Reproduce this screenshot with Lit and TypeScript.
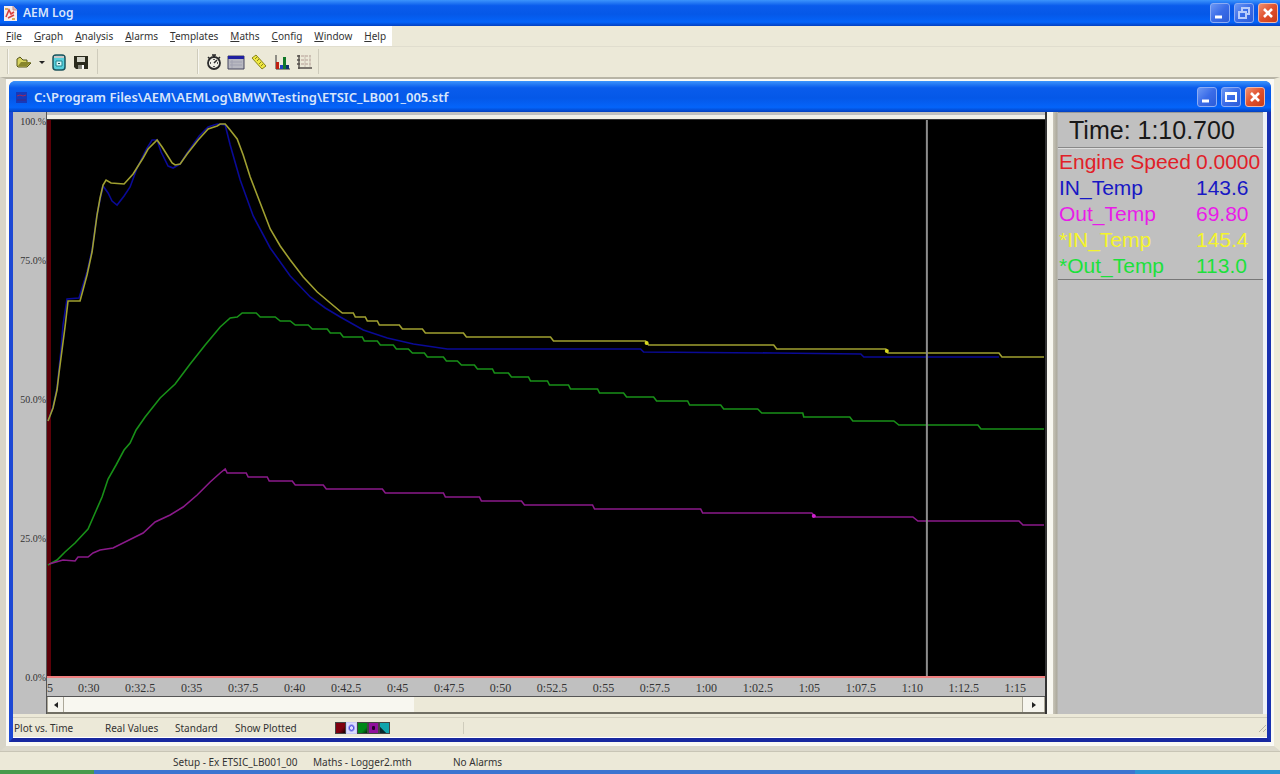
import { LitElement, html, css, svg, nothing } from "lit";
import { customElement, property, state } from "lit/decorators.js";

type Trace = { color: string; points: string };

// Traces are plotted in the coordinate space of the chart's viewBox.
const TRACES: Trace[] = [
  {
    color: "#0a0a96",
    points:
      "48,421 53,407 57,388 61,350 63,325 67,299 79,298 87,272 92,250 97,214 103,186 108,193 112,201 117,205 124,196 130,187 137,168 147,148 152,140 157,140 161,152 168,166 173,168 180,164 187,153 199,136 208,127 217,124 225,125 230,145 240,180 253,216 270,248 290,276 310,297 325,308 340,317 363,330 387,338 413,344 447,349 640,349 643,352 773,353 860,354 863,357 998,357",
  },
  {
    color: "#a0a030",
    points:
      "48,421 53,408 57,390 59,373 62,350 65,327 68,301 80,301 87,275 92,252 97,215 100,198 103,185 106,180 111,183 124,184 133,174 143,158 148,149 157,140 162,147 172,163 175,165 180,164 187,154 198,140 208,129 217,126 220,124 225,124 230,130 237,139 243,155 250,177 260,203 270,229 280,246 290,260 303,277 317,292 330,303 342,313 353,313 355,317 365,317 367,321 377,321 379,325 399,325 402,329 422,329 425,333 463,333 466,337 550,337 553,341 645,341 648,345 773,345 776,349 885,349 887,353 998,353 1001,357 1043,357",
  },
  {
    color: "#189018",
    points:
      "48,565 57,560 65,552 75,543 88,529 95,513 102,497 108,479 116,465 124,450 130,443 136,430 145,417 160,398 175,384 190,364 205,345 220,327 230,318 237,317 242,313 256,313 260,317 275,317 280,321 290,321 295,325 308,325 312,329 327,329 330,333 340,333 343,337 362,337 364,341 377,341 380,345 393,345 396,349 408,349 412,353 424,353 427,357 443,357 446,361 457,361 461,365 474,365 477,369 492,369 494,373 508,373 511,377 528,377 530,381 547,381 549,385 568,385 570,389 597,389 599,393 623,393 626,397 653,397 656,401 687,401 689,405 720,405 723,409 757,409 761,413 802,413 803,417 849,417 852,421 893,421 898,425 977,425 980,429 1043,429",
  },
  {
    color: "#8a1a8a",
    points:
      "49,564 63,560 75,561 78,557 88,557 93,553 100,550 113,548 133,538 143,533 155,522 170,515 183,507 197,495 210,482 220,473 225,469 227,473 246,473 248,477 267,477 269,481 292,481 295,485 323,485 326,489 382,489 385,493 443,493 445,497 479,497 481,501 521,501 524,505 592,505 594,509 700,509 702,513 811,513 815,517 912,517 917,521 1018,521 1022,525 1043,525",
  },
];

const MARKERS = [
  { x: 646, y: 343, color: "#d8d820" },
  { x: 886, y: 351, color: "#d8d820" },
  { x: 813, y: 516, color: "#d020d0" },
];

const CHANNELS = [
  { name: "Engine Speed", value: "0.0000", tone: "red" },
  { name: "IN_Temp", value: "143.6", tone: "blue" },
  { name: "Out_Temp", value: "69.80", tone: "magenta" },
  { name: "*IN_Temp", value: "145.4", tone: "yellow" },
  { name: "*Out_Temp", value: "113.0", tone: "green" },
];

const TIME_TICKS = [
  "0:30", "0:32.5", "0:35", "0:37.5", "0:40", "0:42.5", "0:45", "0:47.5", "0:50", "0:52.5",
  "0:55", "0:57.5", "1:00", "1:02.5", "1:05", "1:07.5", "1:10", "1:12.5", "1:15",
];

const MENUS = ["File", "Graph", "Analysis", "Alarms", "Templates", "Maths", "Config", "Window", "Help"];

@customElement("window-buttons")
class WindowButtons extends LitElement {
  @property({ type: Boolean }) maximized = false;

  static styles = css`
    :host { display: flex; gap: 4px; }
    button {
      width: 20px; height: 20px; padding: 0; border: 1px solid #8cacf4; border-radius: 3px;
      background: linear-gradient(135deg, #6c98f4, #3a6ce8 50%, #2c5cd8);
    }
    .close { background: linear-gradient(135deg, #f09070, #e0502c 50%, #c83c18); border-color: #f0b8a8; }
    svg { display: block; width: 18px; height: 18px; fill: none; stroke: #fff; stroke-width: 2; }
  `;

  render() {
    return html`
      <button aria-label="Minimize"><svg viewBox="0 0 18 18"><path stroke-width="3" d="M4 13h7" /></svg></button>
      ${this.maximized
        ? html`<button aria-label="Restore"><svg viewBox="0 0 18 18"><path stroke="#b8ccfa" d="M7 7V4h7v6h-3M4 8h7v6H4z" /></svg></button>`
        : html`<button aria-label="Maximize"><svg viewBox="0 0 18 18"><path d="M4 5h10v8H4zM4 6h10" /></svg></button>`}
      <button class="close" aria-label="Close"><svg viewBox="0 0 18 18"><path stroke-width="2.6" d="M5 5l8 8M13 5l-8 8" /></svg></button>
    `;
  }
}

@customElement("tool-bar")
class ToolBar extends LitElement {
  static styles = css`
    :host { display: flex; height: 31px; box-sizing: border-box; padding: 2px 0 3px 7px; border-top: 1px solid #e0ddce; }
    .group { display: flex; align-items: center; border-left: 1px solid #cfccbc; border-right: 1px solid #cfccbc; padding: 0 4px 0 6px; box-shadow: inset 1px 0 #f8f7f0; }
    .files { width: 79px; }
    .views { margin-left: 99px; width: 110px; gap: 3px; }
    button { border: 0; padding: 0; background: none; width: 20px; height: 20px; }
    .drop { width: 16px; }
    .wide { width: 24px; }
    svg { display: block; width: 18px; height: 18px; margin: auto; }
    .drop svg { width: 8px; }
  `;

  render() {
    return html`
      <div class="group files">
        <button aria-label="Open"><svg viewBox="0 0 18 18"><path fill="#d8d460" stroke="#55551a" d="M2 13V6l3-2 3 3h4v3h4l-4 4H3z" /><path fill="#88862c" d="M3 13l3-4h10l-4 4z" /></svg></button>
        <button class="drop" aria-label="Open recent"><svg viewBox="0 0 8 18"><path d="M1 8h6l-3 3z" fill="#222" /></svg></button>
        <button aria-label="Download log"><svg viewBox="0 0 18 18"><rect x="3" y="2" width="12" height="15" rx="3" fill="#58d0dc" stroke="#1c545c" stroke-width="1.5" /><path d="M4 4h10" stroke="#c8c8c8" stroke-width="2" /><path d="M6 8h6v5H6z" fill="#d8f8f8" stroke="#208490" /><path d="M8 10h2v1H8z" fill="#105058" /></svg></button>
        <button class="wide" aria-label="Save"><svg viewBox="0 0 18 18"><path d="M2 3h14v13H4l-2-2z" fill="#2a2a1c" /><path d="M5 4h8v5H5z" fill="#d4d4c8" /><path d="M6 12h6v4H6z" fill="#86867a" /><path d="M10 12h2v4h-2z" fill="#fff" /></svg></button>
      </div>
      <div class="group views">
        <button aria-label="Timer"><svg viewBox="0 0 18 18"><circle cx="9" cy="10" r="6" fill="#f0efe6" stroke="#2a2a2a" stroke-width="1.8" /><path d="M7 2h4M9 2v2M3 4l2 2M15 4l-2 2M9 10l3-3M9 6v1M9 13v1M5 10h1M12 10h1" stroke="#2a2a2a" stroke-width="1.5" /></svg></button>
        <button aria-label="Table view"><svg viewBox="0 0 18 18"><path d="M1 3h16v13H1z" fill="#b8b8c0" stroke="#44445c" /><path d="M1 3h16v3H1z" fill="#2020a0" /><path d="M3 9h12M3 12h12M5 7v8" stroke="#a0a0b0" /></svg></button>
        <button aria-label="Measure"><svg viewBox="0 0 18 18"><path d="M2 5l4-3 10 11-4 3z" fill="#f0e840" stroke="#88841c" /><path d="M7 4L5 6M9 6L7 8M11 9l-2 2M13 11l-2 2" stroke="#88841c" /></svg></button>
        <button aria-label="Histogram"><svg viewBox="0 0 18 18"><path d="M3 2v14h14" fill="none" stroke="#333" /><path d="M3 9h3v7H3z" fill="#c02010" /><path d="M7 12h3v4H7z" fill="#2040c0" /><path d="M10 4h3v12h-3z" fill="#107828" /><path d="M13 12h3v4h-3z" fill="#103070" /></svg></button>
        <button aria-label="Grid"><svg viewBox="0 0 18 18"><path d="M4 2v14M2 3h3M2 7h3M2 11h3M3 15h14" fill="none" stroke="#55504c" stroke-width="1.4" /><path d="M6 3h10M6 7h10M6 11h10" stroke="#b49c94" stroke-dasharray="3 1" /><path d="M10 2v12M15 2v12" stroke="#c8bcb0" /></svg></button>
      </div>
    `;
  }
}

@customElement("log-plot")
class LogPlot extends LitElement {
  static styles = css`
    :host { display: grid; grid-template-columns: 33px minmax(0, 1fr); background: #c0c0c0; min-width: 0; min-height: 0; }
    .scale {
      display: flex; flex-direction: column; justify-content: space-between; align-items: flex-end;
      margin-bottom: 30px; padding-top: 4px;
      font: 10px/12px "Liberation Serif", serif; color: #333;
    }
    .body { display: flex; flex-direction: column; min-width: 0; min-height: 0; border-left: 1px solid #555; border-right: 2px solid #333; }
    .rim { height: 8px; background: linear-gradient(#c0c0c0 3px, #f0efe8 3px, #f0efe8 7px, #333 7px); }
    .canvas { flex: 1; min-height: 0; background: #000; border-bottom: 2px solid #f08080; }
    .canvas svg { display: block; width: 100%; height: 100%; }
    .trace { fill: none; stroke-width: 1.6; }
    .times {
      display: grid; grid-template-columns: 16px repeat(19, minmax(0, 1fr)); padding-right: 4px; height: 19px; box-sizing: border-box;
      border-bottom: 1px solid #555; font: 12px/20px "Liberation Serif", serif; color: #333; text-align: center;
    }
    .first { text-align: left; }
    .scroll { display: flex; height: 17px; box-sizing: border-box; border-bottom: 2px solid #716f64; background: #ece9d8; }
    .scroll button { width: 17px; padding: 0; border: 1px solid #aca899; border-width: 0 1px; background: #f6f5ee; }
    .scroll .next { width: 23px; }
    .scroll svg { display: block; width: 8px; height: 8px; margin: auto; }
    .scroll input { appearance: none; flex: 1; min-width: 0; margin: 0; height: 15px; background: #ece9d8; }
    .scroll input::-webkit-slider-thumb { appearance: none; width: 350px; height: 15px; background: #f8f7f0; }
  `;

  render() {
    return html`
      <div class="scale">
        ${["100.%", "75.0%", "50.0%", "25.0%", "0.0%"].map((t) => html`<span>${t}</span>`)}
      </div>
      <div class="body">
        <div class="rim"></div>
        <div class="canvas">
          <svg viewBox="47 120 997 556" preserveAspectRatio="none" role="img" aria-label="Channel traces against time">
            <rect x="47" y="120" width="4" height="556" fill="#5c0008" />
            ${TRACES.map((t) => svg`<polyline class="trace" stroke=${t.color} points=${t.points} />`)}
            ${MARKERS.map((m) => svg`<circle cx=${m.x} cy=${m.y} r="2" fill=${m.color} />`)}
            <path d="M926 120V676" stroke="#8c8c8c" stroke-width="2" />
          </svg>
        </div>
        <div class="times">
          <span class="first">5</span>
          ${TIME_TICKS.map((t) => html`<span>${t}</span>`)}
        </div>
        <div class="scroll">
          <button aria-label="Scroll left"><svg viewBox="0 0 8 8"><path d="M6 1v6L2 4z" fill="#222" /></svg></button>
          <input type="range" min="0" max="100" value="0" aria-label="Time position" />
          <button class="next" aria-label="Scroll right"><svg viewBox="0 0 8 8"><path d="M2 1v6l4-3z" fill="#222" /></svg></button>
        </div>
      </div>
    `;
  }
}

@customElement("value-panel")
class ValuePanel extends LitElement {
  static styles = css`
    :host { display: block; background: #c0c0c0; font-family: "Liberation Sans", Arial, sans-serif; }
    .time { margin: 0; padding: 2px 0 0 11px; height: 36px; box-sizing: border-box; font-size: 25px; line-height: 30px; color: #181818; border-top: 1px solid #999; border-bottom: 1px solid #888; white-space: nowrap; }
    table { width: 100%; border-collapse: collapse; table-layout: fixed; border-bottom: 1px solid #777; border-top: 1px solid #ddd; }
    th, td { padding: 0 0 0 1px; height: 26px; font-weight: 400; font-size: 21px; line-height: 26px; text-align: left; white-space: nowrap; }
    th { width: 136px; }
    .red { color: #e02028; }
    .blue { color: #1818c4; }
    .magenta { color: #e81ce8; }
    .yellow { color: #f4f42c; }
    .green { color: #1ce03c; }
  `;

  render() {
    return html`
      <p class="time">Time: 1:10.700</p>
      <table>
        ${CHANNELS.map((c) => html`<tr class=${c.tone}><th scope="row">${c.name}</th><td>${c.value}</td></tr>`)}
      </table>
    `;
  }
}

@customElement("app-root")
class AppRoot extends LitElement {
  @state() private menus = MENUS;

  static styles = css`
    :host {
      display: flex; flex-direction: column; height: 100vh; min-height: 420px; overflow: hidden;
      background: #ece9d8; color: #333; font: 10px/14px "Noto Sans", sans-serif;
    }
    .title {
      display: flex; align-items: center; box-sizing: border-box; flex: none;
      color: #d8e6fc; font-size: 12px; font-weight: 600; line-height: 16px; white-space: nowrap;
      background: linear-gradient(#3c94fc, #0a5cec 22%, #0558e8 55%, #0464fa 85%, #0340c0);
    }
    .title window-buttons { margin-left: auto; }
    .main { height: 26px; padding: 0 2px 0 3px; gap: 5px; }
    .logo { width: 15px; height: 17px; flex: none; }
    nav { display: flex; align-items: center; align-self: flex-start; height: 20px; box-sizing: border-box; padding: 0 6px; gap: 12px; background: #fff; flex: none; }
    nav button { border: 0; padding: 0; background: none; font: inherit; color: #333; }
    nav u { text-underline-offset: 1px; }
    .desk { flex: 1; min-height: 0; display: flex; padding: 2px 3px 4px; background: #faf9f4; border: 6px solid #ece9d8; border-top: 2px solid #b8b5a6; border-left-color: #d8d5c8; border-bottom: 5px solid #dcd9cc; box-sizing: border-box; }
    .child { flex: 1; min-width: 0; display: flex; flex-direction: column; border: 4px solid #1c48d4; border-top: 0; border-bottom-color: #1828a0; border-right-color: #1830b0; border-radius: 7px 7px 0 0; background: #ece9d8; }
    .child .title { height: 31px; margin: 0 -4px; padding: 1px 6px 0 7px; gap: 6px; border-radius: 6px 6px 0 0; font-size: 13px; }
    .child .title svg { width: 11px; height: 11px; flex: none; margin-right: 1px; }
    .split { flex: 1; min-height: 0; display: grid; grid-template-columns: minmax(0, 1fr) 11px 205px; border-right: 4px solid #eef2f8; }
    .bar { background: linear-gradient(90deg, #f8f7f0 6px, #c8c5b8 6px, #aca99c 10px, #c0c0c0); }
    .status { display: flex; align-items: center; height: 21px; flex: none; box-sizing: border-box; border-top: 1px solid #cfccbc; border-bottom: 1px solid #fff; padding-left: 1px; margin-top: 3px; white-space: nowrap; }
    .plot { width: 91px; }
    .real { width: 70px; }
    .std { width: 60px; }
    .show { width: 100px; }
    .swatches { display: flex; width: 128px; border-right: 1px solid #cfccbc; }
    .swatches button { width: 11px; height: 12px; padding: 0; border: 1px solid #444; }
    .swatches .s2 { border-color: #c8c8f8; }
    .s1 { background: linear-gradient(135deg, #800010 60%, #100); }
    .s2 { background: radial-gradient(#dcdcff 20%, #4848e0 30%, #dcdcff 60%); }
    .s3 { background: linear-gradient(135deg, #008818 65%, #002808); }
    .s4 { background: radial-gradient(#280030 25%, #90109c 30%); }
    .s5 { background: linear-gradient(45deg, #08282c 30%, #10a4ac 35%); }
    .grip { width: 10px; height: 10px; margin-left: auto; }
    footer { display: flex; align-items: center; height: 19px; flex: none; box-sizing: border-box; border-top: 1px solid #c8c5b6; padding: 1px 0 0 173px; background: #ece9d8; white-space: nowrap; }
    .setup, .maths { width: 140px; }
    .task { display: flex; height: 4px; flex: none; background: #3c74d0; }
    .start { width: 94px; background: #489a4c; }
    .tray { width: 145px; margin-left: auto; background: #2c94d4; }
  `;

  render() {
    return html`
      <header class="title main">
        <svg class="logo" viewBox="0 0 15 17"><path d="M1 1h9l4 4v11H1z" fill="#f6ecec" /><path d="M10 1v4h4" fill="#e0b8b0" stroke="#c09090" /><path d="M3 12l3-7 2 4 3-2M5 13l6-3" fill="none" stroke="#d84040" stroke-width="1.6" /><path d="M2 4h3M9 14h3" stroke="#c89830" stroke-width="1.5" /></svg>
        <span>AEM Log</span>
        <window-buttons maximized></window-buttons>
      </header>
      <nav>
        ${this.menus.map((m) => html`<button><u>${m[0]}</u>${m.slice(1) || nothing}</button>`)}
      </nav>
      <tool-bar></tool-bar>
      <main class="desk">
        <section class="child">
          <div class="title">
            <svg viewBox="0 0 11 11"><path d="M0 0h11v11H0z" fill="#1838b8" /><path d="M1 4l3-1 3 1 3-1" fill="none" stroke="#a02858" /><path d="M1 8h9" stroke="#402880" /></svg>
            <span>C:\\Program Files\\AEM\\AEMLog\\BMW\\Testing\\ETSIC_LB001_005.stf</span>
            <window-buttons></window-buttons>
          </div>
          <div class="split">
            <log-plot></log-plot>
            <div class="bar"></div>
            <value-panel></value-panel>
          </div>
          <div class="status">
            <span class="plot">Plot vs. Time</span>
            <span class="real">Real Values</span>
            <span class="std">Standard</span>
            <span class="show">Show Plotted</span>
            <div class="swatches">
              <button class="s1" aria-label="Channel 1"></button>
              <button class="s2" aria-label="Channel 2"></button>
              <button class="s3" aria-label="Channel 3"></button>
              <button class="s4" aria-label="Channel 4"></button>
              <button class="s5" aria-label="Channel 5"></button>
            </div>
            <svg class="grip" viewBox="0 0 10 10"><path d="M2 9l7-7M6 9l3-3" stroke="#b8b5a4" /></svg>
          </div>
        </section>
      </main>
      <footer>
        <span class="setup">Setup - Ex ETSIC_LB001_00</span>
        <span class="maths">Maths - Logger2.mth</span>
        <span>No Alarms</span>
      </footer>
      <div class="task"><div class="start"></div><div class="tray"></div></div>
    `;
  }
}
